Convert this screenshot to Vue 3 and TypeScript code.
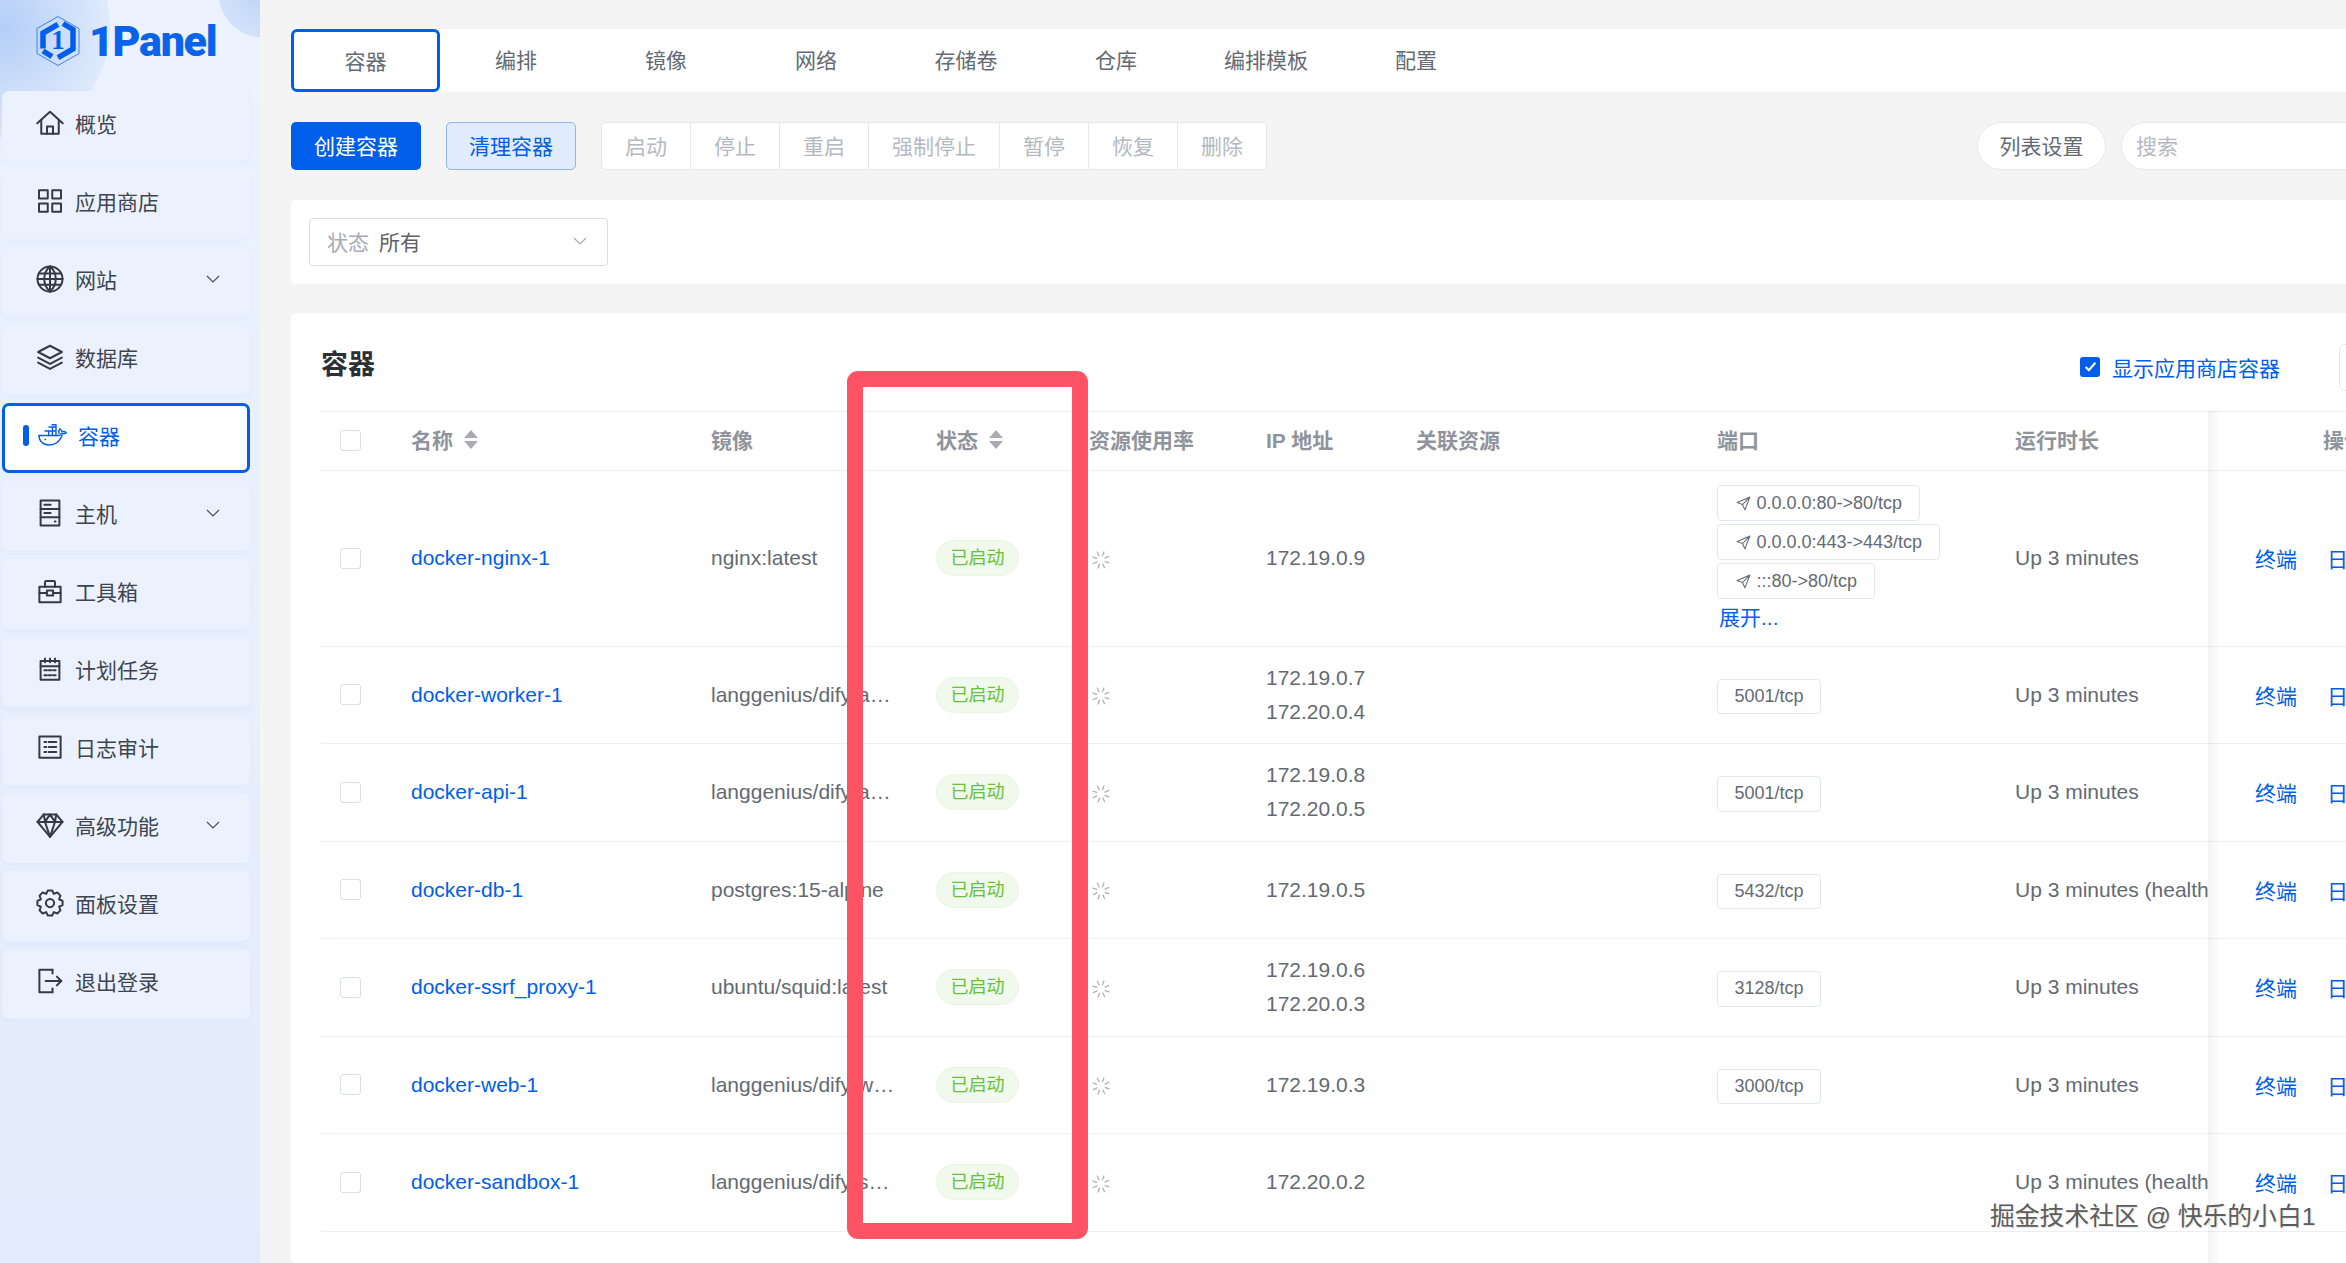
<script setup lang="ts">
interface MenuItem { label: string; paths: string[]; chevron?: boolean; active?: boolean }

function gearPath(): string {
  const cx = 12, cy = 12, teeth = 8
  const pts: string[] = []
  for (let i = 0; i < teeth; i++) {
    const a = (i / teeth) * Math.PI * 2 - Math.PI / 2
    const s = (Math.PI * 2) / teeth
    const p = (r: number, o: number) =>
      `${(cx + r * Math.cos(a + o * s)).toFixed(2)} ${(cy + r * Math.sin(a + o * s)).toFixed(2)}`
    pts.push(`${i === 0 ? 'M' : 'L'}${p(7.9, -0.5)}`, `L${p(10.2, -0.22)}`, `L${p(10.2, 0.22)}`)
  }
  return pts.join(' ') + ' Z'
}

const menu: MenuItem[] = [
  { label: '概览', paths: ['M1.8 12.2L12 3l10.2 9.2', 'M5 10v10.5h14V10', 'M9.6 20.5v-5.8h4.8v5.8'] },
  { label: '应用商店', paths: ['M3.2 3.4h7v6.6h-7z', 'M13.8 3.4h7v6.6h-7z', 'M3.2 14h7v6.6h-7z', 'M13.8 14h7v6.6h-7z'] },
  { label: '网站', chevron: true, paths: ['M12 2a10 10 0 1 0 0 20a10 10 0 1 0 0-20z', 'M12 2c-3.5 3-4.6 6.5-4.6 10s1.100 7 4.600 10', 'M12 2c3.500 3 4.600 6.500 4.600 10s-1.100 7-4.600 10', 'M12 2v20', 'M2 12h20', 'M3.300 7.500h17.400', 'M3.300 16.500h17.400'] },
  { label: '数据库', paths: ['M12 3l9.500 5-9.500 5-9.500-5z', 'M2.500 12.500l9.500 5 9.500-5', 'M2.500 16.500l9.500 5 9.500-5'] },
  { label: '容器', active: true, paths: [] },
  { label: '主机', chevron: true, paths: ['M4.500 2h15v20h-15z', 'M4.500 8.700h15', 'M4.500 15.300h15', 'M7.500 5.400h5', 'M7.500 12h5', 'M15.800 18.700h.6'] },
  { label: '工具箱', paths: ['M3.500 8.500h17v12.500h-17z', 'M8 8.500V5a1 1 0 0 1 1-1h6a1 1 0 0 1 1 1v3.500', 'M3.500 13.500h6', 'M14.500 13.500h6', 'M9.500 11.500h5v4h-5z'] },
  { label: '计划任务', paths: ['M4.500 5.500h15v15h-15z', 'M4.500 9.800h15', 'M8 3.500v3', 'M12 3.500v3', 'M16 3.500v3', 'M7.500 13h2M11 13h2M14.500 13h2M7.500 17h2M11 17h2M14.500 17h2'] },
  { label: '日志审计', paths: ['M3.500 3.500h17v17h-17z', 'M7.500 8h1.500M11 8h6M7.500 12h1.500M11 12h6M7.500 16h1.500M11 16h6'] },
  { label: '高级功能', chevron: true, paths: ['M7 3.500h10l5 6-10 12-10-12z', 'M2 9.500h20', 'M8 9.500l4 12 4-12', 'M7 3.500l1 6 4-6 4 6 1-6'] },
  { label: '面板设置', paths: [gearPath(), 'M12 8.700a3.300 3.300 0 1 0 0 6.600a3.300 3.300 0 1 0 0-6.600z'] },
  { label: '退出登录', paths: ['M14 3H3.500v18H14', 'M14 3v3', 'M14 18v3', 'M8.500 12H21', 'M17.500 8.500L21 12l-3.500 3.500'] },
]

const tabs = ['容器', '编排', '镜像', '网络', '存储卷', '仓库', '编排模板', '配置']
const actions = ['启动', '停止', '重启', '强制停止', '暂停', '恢复', '删除']

interface Row { name: string; image: string; ips: string[]; ports: string[]; more?: boolean; up: string; tall?: boolean }
const health = 'Up 3 minutes (healthy)'
const rows: Row[] = [
  { name: 'docker-nginx-1', image: 'nginx:latest', ips: ['172.19.0.9'], ports: ['0.0.0.0:80->80/tcp', '0.0.0.0:443->443/tcp', ':::80->80/tcp'], more: true, up: 'Up 3 minutes', tall: true },
  { name: 'docker-worker-1', image: 'langgenius/dify-api:0.15.3', ips: ['172.19.0.7', '172.20.0.4'], ports: ['5001/tcp'], up: 'Up 3 minutes' },
  { name: 'docker-api-1', image: 'langgenius/dify-api:0.15.3', ips: ['172.19.0.8', '172.20.0.5'], ports: ['5001/tcp'], up: 'Up 3 minutes' },
  { name: 'docker-db-1', image: 'postgres:15-alpine', ips: ['172.19.0.5'], ports: ['5432/tcp'], up: health },
  { name: 'docker-ssrf_proxy-1', image: 'ubuntu/squid:latest', ips: ['172.19.0.6', '172.20.0.3'], ports: ['3128/tcp'], up: 'Up 3 minutes' },
  { name: 'docker-web-1', image: 'langgenius/dify-web:0.15.3', ips: ['172.19.0.3'], ports: ['3000/tcp'], up: 'Up 3 minutes' },
  { name: 'docker-sandbox-1', image: 'langgenius/dify-sandbox:0.2.10', ips: ['172.20.0.2'], ports: [], up: health },
]

const spokes = Array.from({ length: 8 }, (_, i) => i * 45)
const colWidths = [72, 300, 225, 153, 177, 150, 301, 298, 211, 183]
</script>

<template>
  <div class="app">
    <aside class="sidebar">
      <div class="logo">
        <svg class="logo-mark" viewBox="0 0 46 52" width="46" height="52">
          <path class="hex-thin" d="M23 1.500L44 13.500V38.500L23 50.500L2 38.500V13.500Z" />
          <path class="hex-thick" d="M8 33.500V18L23 9.300" />
          <path class="hex-thick" d="M28 8.500L38 14.500V34L23 42.700" />
          <path class="hex-thick" d="M8 36L17 41.500" />
          <text x="23" y="34" class="logo-one">1</text>
        </svg>
        <span class="logo-text">1Panel</span>
      </div>
      <nav class="menu">
        <div v-for="item in menu" :key="item.label" class="menu-item" :class="{ active: item.active }">
          <template v-if="item.active">
            <span class="active-bar"></span>
            <svg class="m-icon docker" viewBox="0 0 30 22" width="30" height="22">
              <path d="M1 11.500h19.500c1.500 0 2.500-1 3-2 1.500.5 3 .3 4.800-.7-1-1-2.800-1.500-4.300-1-.4-1.500-1.300-2.500-2-3-1 1-1.500 2.500-1 4.500" />
              <path d="M1 11.500C1 17 5 21 11 21c7 0 11-4 13-9.500" />
              <path d="M7 7h11v4.500M10.700 7v4.500M14.300 7v4.500M11 3h7v4M14.500 3v4M14 .8h4V3" />
              <path d="M7 15.500h.6" />
            </svg>
          </template>
          <svg v-else class="m-icon" viewBox="0 0 24 24" width="30" height="30">
            <path v-for="(d, i) in item.paths" :key="i" :d="d" />
          </svg>
          <span class="m-label">{{ item.label }}</span>
          <svg v-if="item.chevron" class="m-chevron" viewBox="0 0 14 8" width="14" height="8">
            <path d="M1 1l6 6 6-6" />
          </svg>
        </div>
      </nav>
    </aside>

    <main class="main">
      <div class="inner">
        <div class="tabs">
          <div v-for="(t, i) in tabs" :key="t" class="tab" :class="{ on: i === 0 }">{{ t }}</div>
        </div>

        <div class="toolbar">
          <button class="btn primary">创建容器</button>
          <button class="btn soft">清理容器</button>
          <div class="group">
            <span v-for="a in actions" :key="a" class="group-btn">{{ a }}</span>
          </div>
          <button class="btn pill">列表设置</button>
          <div class="search">搜索</div>
        </div>

        <div class="filter-card">
          <div class="select">
            <span class="sel-label">状态</span>
            <span class="sel-value">所有</span>
            <svg class="sel-chevron" viewBox="0 0 14 8" width="14" height="8"><path d="M1 1l6 6 6-6" /></svg>
          </div>
        </div>

        <section class="table-card">
          <div class="title-row">
            <h2 class="title">容器</h2>
            <label class="show-app">
              <span class="check-on">
                <svg viewBox="0 0 14 14" width="15" height="15"><path d="M2.500 7.500l3 3 6-7" /></svg>
              </span>
              显示应用商店容器
            </label>
            <span class="edge-btn"></span>
          </div>

          <div class="table-wrap">
            <table class="table">
              <colgroup>
                <col v-for="(w, i) in colWidths" :key="i" :style="{ width: w + 'px' }" />
              </colgroup>
              <thead>
                <tr>
                  <th class="cell-check"><span class="checkbox"></span></th>
                  <th><span class="th-sort">名称<span class="carets"><i class="up"></i><i class="down"></i></span></span></th>
                  <th>镜像</th>
                  <th><span class="th-sort">状态<span class="carets"><i class="up"></i><i class="down"></i></span></span></th>
                  <th>资源使用率</th>
                  <th>IP 地址</th>
                  <th>关联资源</th>
                  <th>端口</th>
                  <th>运行时长</th>
                  <th class="ops-head">操作</th>
                </tr>
              </thead>
              <tbody>
                <tr v-for="r in rows" :key="r.name" :class="{ tall: r.tall }">
                  <td class="cell-check"><span class="checkbox"></span></td>
                  <td><span class="link">{{ r.name }}</span></td>
                  <td><div class="image">{{ r.image }}</div></td>
                  <td><span class="status">已启动</span></td>
                  <td>
                    <svg class="spinner" viewBox="0 0 20 20" width="20" height="20">
                      <line v-for="a in spokes" :key="a" x1="10" y1="1.500" x2="10" y2="5.500" :transform="`rotate(${a + 20} 10 10)`" />
                    </svg>
                  </td>
                  <td><div v-for="ip in r.ips" :key="ip" class="ip">{{ ip }}</div></td>
                  <td></td>
                  <td>
                    <div class="ports" :class="{ single: !r.tall }">
                      <span v-for="p in r.ports" :key="p" class="port">
                        <svg v-if="r.tall" viewBox="0 0 24 24" width="17" height="17"><path d="M21 3L3 10.500l7.500 3L14 21zM21 3L10.500 13.500" /></svg>
                        {{ p }}
                      </span>
                      <span v-if="r.more" class="link more">展开...</span>
                    </div>
                  </td>
                  <td class="cell-up">{{ r.up }}</td>
                  <td class="ops"><span class="link">终端</span><span class="link">日志</span></td>
                </tr>
              </tbody>
            </table>
          </div>
        </section>
      </div>
    </main>

    <div class="red-box"></div>
    <div class="watermark">掘金技术社区 @ 快乐的小白1</div>
  </div>
</template>

<style>
html, body { margin: 0; overflow: hidden; }
</style>

<style scoped>
.app {
  position: relative;
  display: flex;
  width: 100vw;
  height: 100vh;
  overflow: hidden;
  background: #f4f4f5;
  font-family: "Liberation Sans", "Noto Sans CJK SC", sans-serif;
  font-size: 21px;
  color: #646a73;
}

/* sidebar */
.sidebar {
  flex: 0 0 260px;
  height: 100%;
  background:
    radial-gradient(circle at 262px -6px, #bdd4f8 0, #d3e2fa 43px, transparent 43.5px),
    radial-gradient(circle at 0 28px, #b3cef7 0, #dfeafc 110px, transparent 110.5px),
    linear-gradient(180deg, #ecf3fe 0, #e3ecfc 100%);
}
.logo {
  height: 91px;
  box-sizing: border-box;
  display: flex;
  align-items: flex-start;
  padding: 15px 0 0 35px;
  gap: 8px;
}
.logo-mark { flex: none; }
.hex-thin { fill: none; stroke: #3d83ea; stroke-width: 1; }
.hex-thick { fill: none; stroke: #005eeb; stroke-width: 5.500; }
.logo-one { font-family: "Liberation Serif", serif; font-weight: 700; font-size: 27px; fill: #005eeb; text-anchor: middle; }
.logo-text {
  font-family: "Roboto", sans-serif;
  font-weight: 900;
  font-size: 43px;
  line-height: 50px;
  letter-spacing: -1.300px;
  color: #0a63ea;
  margin-top: 1px;
}
.menu {
  display: flex;
  flex-direction: column;
  gap: 8.500px;
  padding: 0 10px 0 2px;
}
.menu-item {
  height: 69.500px;
  box-sizing: border-box;
  display: flex;
  align-items: center;
  gap: 10px;
  padding: 0 30px 5px 33px;
  border-radius: 7px;
  background: #ebf2fe;
  box-shadow: 0 2px 5px rgba(120, 160, 230, 0.06);
  color: #3f4550;
}
.menu-item.active {
  background: #fff;
  border: 3px solid #005eeb;
  padding-left: 18px;
  color: #005eeb;
  box-shadow: none;
}
.active-bar {
  width: 6px;
  height: 21px;
  border-radius: 3px;
  background: #005eeb;
  margin-right: -1px;
}
.m-icon { flex: none; fill: none; stroke: #343a46; stroke-width: 1.600; stroke-linejoin: round; stroke-linecap: round; }
.m-icon.docker { stroke: #005eeb; stroke-width: 1.400; }
.m-label { flex: 1; }
.m-chevron { fill: none; stroke: #4a4f5a; stroke-width: 1.200; }

/* main */
.main { flex: 1; min-width: 0; height: 100%; overflow: hidden; }
.inner {
  width: 2130px;
  height: 100%;
  margin-left: 31px;
  padding-top: 29px;
  box-sizing: border-box;
  display: flex;
  flex-direction: column;
}
.tabs {
  height: 63px;
  display: flex;
  background: #fff;
  flex: none;
}
.tab {
  width: 150px;
  flex: none;
  display: flex;
  align-items: center;
  justify-content: center;
  box-sizing: border-box;
  padding-bottom: 4px;
}
.tab.on {
  width: 149px;
  margin-right: 1px;
  border: 3px solid #005eeb;
  border-radius: 6px;
  padding-bottom: 1px;
}
.toolbar {
  display: flex;
  align-items: stretch;
  height: 48px;
  margin-top: 30px;
  flex: none;
}
.btn {
  font: inherit;
  width: 130px;
  margin: 0;
  padding: 0 0 3px;
  box-sizing: border-box;
  border: 1.500px solid transparent;
  border-radius: 5px;
  background: #fff;
  color: inherit;
}
.btn.primary { background: #005eeb; color: #fff; }
.btn.soft { margin-left: 25px; background: #e0ecfc; border-color: #8fb6f0; color: #005eeb; }
.btn.pill {
  margin-left: auto;
  width: 129px;
  border-radius: 24px;
  border-color: #e4e7ed;
}
.group {
  display: flex;
  margin-left: 25px;
  background: #fff;
  border: 1.500px solid #e6e8ec;
  border-right-width: 0;
  border-radius: 5px;
  box-sizing: border-box;
  color: #b4b8bf;
}
.group-btn {
  display: flex;
  align-items: center;
  padding: 0 23px 3px;
  border-right: 1.500px solid #e6e8ec;
}
.search {
  flex: 0 0 300px;
  margin-left: 15px;
  box-sizing: border-box;
  background: #fff;
  border: 1.500px solid #e4e7ed;
  border-radius: 24px 0 0 24px;
  display: flex;
  align-items: center;
  padding: 0 0 2px 14px;
  color: #b4b8bf;
}
.filter-card {
  margin-top: 30px;
  height: 84px;
  flex: none;
  box-sizing: border-box;
  background: #fff;
  padding: 18px;
  border-radius: 4px;
}
.select {
  width: 299px;
  height: 48px;
  box-sizing: border-box;
  border: 1.500px solid #dcdfe6;
  border-radius: 4px;
  display: flex;
  align-items: center;
  padding: 0 20px 3px 17px;
  gap: 10px;
}
.sel-label { color: #a8abb2; }
.sel-value { color: #606266; flex: 1; }
.sel-chevron { fill: none; stroke: #a8abb2; stroke-width: 1.200; }
.table-card {
  margin-top: 29px;
  flex: 1;
  min-height: 0;
  background: #fff;
  padding: 0 30px;
  display: flex;
  flex-direction: column;
  border-radius: 4px;
}
.title-row {
  height: 97.500px;
  flex: none;
  box-sizing: border-box;
  padding-top: 31px;
  display: flex;
  align-items: flex-start;
}
.title {
  margin: 1px auto 0 0;
  font-size: 27px;
  line-height: 40px;
  font-weight: 700;
  color: #2b2f36;
}
.show-app {
  display: flex;
  align-items: center;
  height: 47px;
  gap: 12px;
  color: #005eeb;
  margin-right: 59px;
  padding-bottom: 2px;
  box-sizing: border-box;
}
.check-on {
  width: 20px;
  height: 20px;
  border-radius: 3px;
  background: #005eeb;
  display: flex;
  align-items: center;
  justify-content: center;
}
.check-on svg { fill: none; stroke: #fff; stroke-width: 2; }
.edge-btn {
  width: 52px;
  height: 47px;
  box-sizing: border-box;
  border: 1.500px solid #e4e7ed;
  border-radius: 6px 0 0 6px;
}
.table-wrap { position: relative; flex: 1; min-height: 0; }
.table-wrap::after {
  content: "";
  position: absolute;
  left: 1887px;
  top: 0;
  bottom: 0;
  width: 12px;
  background: linear-gradient(90deg, rgba(0, 0, 0, 0.05), rgba(0, 0, 0, 0));
}
.table {
  width: 2070px;
  table-layout: fixed;
  border-collapse: separate;
  border-spacing: 0;
}
th, td {
  box-sizing: border-box;
  padding: 0 0 0 18px;
  border-bottom: 1.500px solid #ebeef5;
  overflow: hidden;
  white-space: nowrap;
  text-align: left;
  vertical-align: middle;
  font-weight: 400;
}
th {
  height: 60px;
  border-top: 1.500px solid #ebeef5;
  color: #8f939b;
  font-weight: 700;
  padding-bottom: 3px;
}
td { height: 97.500px; }
tr.tall td { height: 176px; }
th.cell-check { padding-bottom: 0; }
.cell-check { padding-left: 18.500px; }
.checkbox {
  display: block;
  width: 21px;
  height: 21px;
  box-sizing: border-box;
  border: 1.500px solid #dcdfe6;
  border-radius: 3px;
  background: #fff;
}
.th-sort { display: inline-flex; align-items: center; }
.carets {
  display: inline-flex;
  flex-direction: column;
  gap: 3px;
  margin-left: 11px;
  padding-top: 1px;
}
.carets i { display: block; width: 0; height: 0; border-left: 7px solid transparent; border-right: 7px solid transparent; }
.carets .up { border-bottom: 8px solid #a8abb2; }
.carets .down { border-top: 8px solid #a8abb2; }
.link { color: #005eeb; }
.image { width: 185px; overflow: hidden; text-overflow: ellipsis; }
.status {
  display: inline-block;
  height: 36px;
  line-height: 35px;
  box-sizing: border-box;
  padding: 0 13.500px;
  font-size: 18px;
  border-radius: 18px;
  color: #67c23a;
  background: #f0f9eb;
  border: 1px solid #eaf5e3;
}
.spinner { display: block; margin: 3px 0 0 2px; }
.spinner line { stroke: #b0b3b8; stroke-width: 1.300; stroke-linecap: round; }
.ip { line-height: 34px; }
.ports { display: flex; flex-direction: column; align-items: flex-start; gap: 3.500px; }
.ports.single { padding-top: 3px; }
.port {
  display: inline-flex;
  align-items: center;
  gap: 5px;
  height: 35.500px;
  box-sizing: border-box;
  padding: 0 16.500px;
  font-size: 18px;
  background: #fff;
  border: 1.500px solid #e4e7ed;
  border-radius: 4px;
}
.port svg { fill: none; stroke: #6b7079; stroke-width: 1.600; stroke-linejoin: round; }
.more { font-size: 21px; line-height: 26px; margin: 2.500px 0 0 2px; }
.cell-up { padding-right: 0; }
.ops-head { padding-left: 115px; }
.ops { padding-left: 47px; }
.ops .link { margin-right: 30px; }

.red-box {
  position: absolute;
  left: 847px;
  top: 371px;
  width: 241px;
  height: 868px;
  box-sizing: border-box;
  border: 16.500px solid #fe5365;
  border-radius: 11px;
  pointer-events: none;
}
.watermark {
  position: absolute;
  left: 1990px;
  top: 1202px;
  font-size: 24.800px;
  line-height: 30px;
  white-space: nowrap;
  color: #5c5c5c;
  text-shadow: 0 0 3px rgba(255, 255, 255, 0.9), 1px 1px 1px rgba(0, 0, 0, 0.15);
}
</style>
